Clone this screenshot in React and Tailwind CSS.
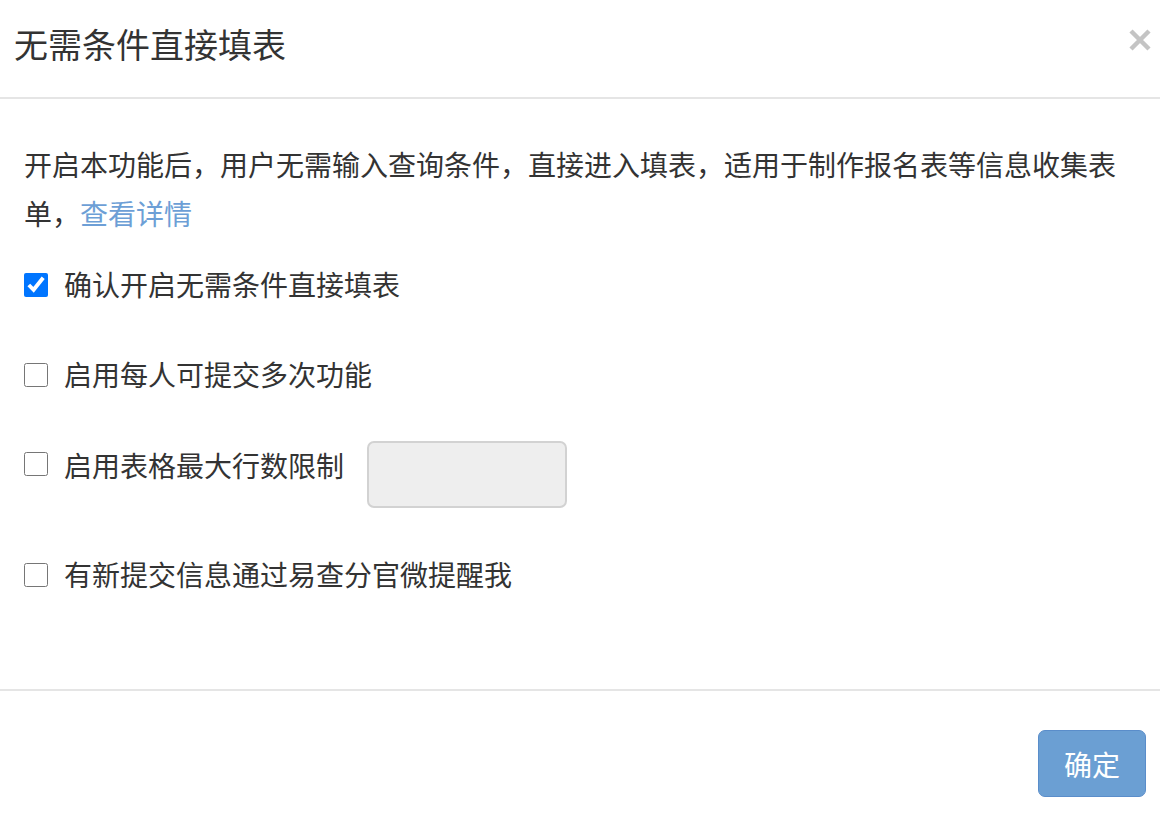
import React from "react";

const font = { fontFamily: '"Noto Sans CJK SC", "Noto Sans", sans-serif' };

function Row({ label, checked }) {
  return (
    <label className="flex items-center h-[49px]">
      <input
        type="checkbox"
        defaultChecked={checked}
        className="m-0 w-[24px] h-[24px] shrink-0"
      />
      <span className="ml-[16px] text-[28px] leading-[49px] text-[#333333]">{label}</span>
    </label>
  );
}

export default function App() {
  return (
    <div className="w-[1160px] h-[813px] bg-white overflow-hidden" style={font}>
      <div className="flex justify-between items-start pl-[14px] pr-[9px] pt-[24px] h-[99px] border-b-2 border-[#e5e5e5]">
        <h4 className="text-[34px] leading-[40px] text-[#333333] font-normal">无需条件直接填表</h4>
        <svg width="22" height="22" viewBox="0 0 22 22" className="mt-[5px]">
          <path d="M2 2 L20 20 M20 2 L2 20" stroke="#c4c4c4" strokeWidth="4.5" strokeLinecap="butt" />
        </svg>
      </div>
      <div className="px-[24px] pt-[41px] pb-[90px] h-[590px]">
        <div className="text-[28px] leading-[49px] text-[#333333]">
          <div>开启本功能后，用户无需输入查询条件，直接进入填表，适用于制作报名表等信息收集表</div>
          <div>
            <span>单，</span>
            <a className="text-[#6d9fd6]">查看详情</a>
          </div>
        </div>
        <div className="mt-[22px]">
          <Row label="确认开启无需条件直接填表" checked />
        </div>
        <div className="mt-[41px]">
          <Row label="启用每人可提交多次功能" />
        </div>
        <div className="mt-[42px] flex items-start">
          <input type="checkbox" className="m-0 mt-[11px] w-[24px] h-[24px] shrink-0" />
          <span className="ml-[16px] text-[28px] leading-[49px] text-[#333333]">启用表格最大行数限制</span>
          <input
            type="text"
            disabled
            className="ml-[23px] w-[200px] h-[67px] bg-[#eeeeee] border-2 border-[#d2d2d2] rounded-[7px]"
          />
        </div>
        <div className="mt-[42px]">
          <Row label="有新提交信息通过易查分官微提醒我" />
        </div>
      </div>
      <div className="border-t-2 border-[#e5e5e5] flex justify-end pt-[39px] pr-[14px]">
        <button className="w-[108px] h-[67px] bg-[#6b9fd3] border border-[#5a8dca] rounded-[7px] text-white text-[28px] leading-none">
          确定
        </button>
      </div>
    </div>
  );
}
